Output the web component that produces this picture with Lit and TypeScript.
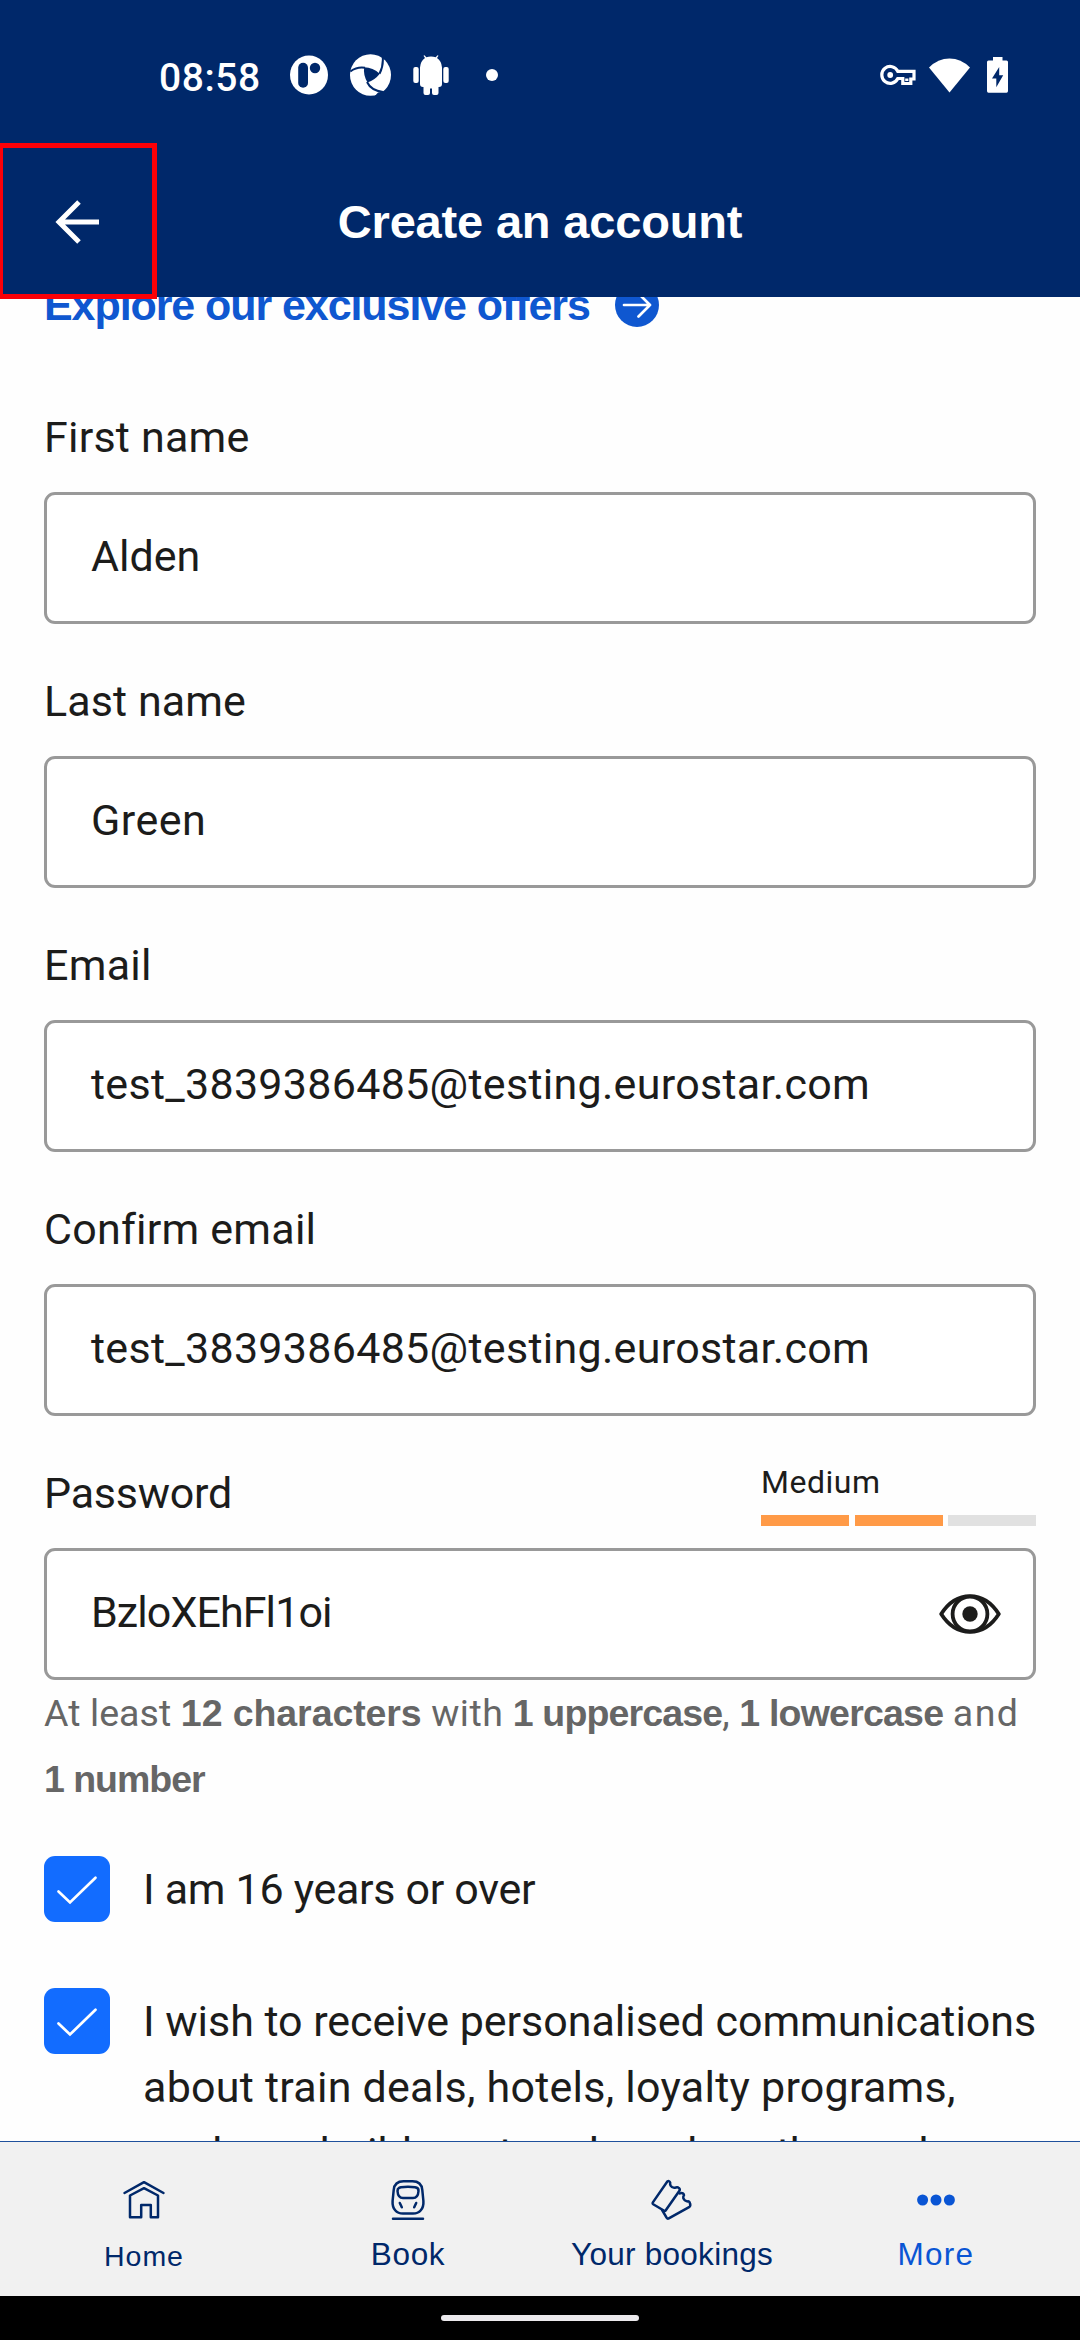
import { LitElement, html, css, svg, nothing } from "lit";
import { customElement, property } from "lit/decorators.js";

const BODY = `Roboto, "Liberation Sans", sans-serif`;
const DISPLAY = `"Liberation Sans", Arial, sans-serif`;
const ctx = document.createElement("canvas").getContext("2d")!;

// Letter spacing that makes the inked width of a run equal to `width`.
function tracking(text: string, weight: number, size: number, width: number, family: string): string {
  ctx.font = `${weight} ${size}px ${family}`;
  const m = ctx.measureText(text);
  const ink = m.actualBoundingBoxRight + m.actualBoundingBoxLeft;
  return `letter-spacing:${((width - ink) / Math.max(1, text.length - 1)).toFixed(3)}px`;
}

/** A run of text set to a given width. */
@customElement("tracked-text")
export class TrackedText extends LitElement {
  @property() text = "";
  @property({ type: Number }) width = 0;
  @property({ type: Number }) size = 43;
  @property({ type: Number }) weight = 400;
  @property({ type: Boolean }) display = false;

  static styles = css`
    :host { display: inline; white-space: pre; }
    .w700 { font-weight: 700; }
    .w500 { font-weight: 500; }
    .display { font-family: "Liberation Sans", Arial, sans-serif; }
  `;

  render() {
    const display = this.display || this.weight === 700;
    return html`<span class="w${this.weight} ${display ? "display" : ""}" style=${tracking(this.text, this.weight, this.size, this.width, display ? DISPLAY : BODY)}>${this.text}</span>`;
  }
}

const run = (text: string, width: number, size = 43, weight = 400, display = false) =>
  html`<tracked-text .text=${text} .width=${width} .size=${size} .weight=${weight} .display=${display}></tracked-text>`;

@customElement("form-field")
export class FormField extends LitElement {
  @property() label = "";
  @property({ type: Number }) labelWidth = 0;
  @property() value = "";
  @property({ type: Number }) valueWidth = 0;
  @property({ type: Boolean }) password = false;

  static styles = css`
    :host { display: block; }
    .head { display: flex; justify-content: space-between; height: 66px; margin-bottom: 22px; line-height: 66px; }
    .box {
      display: flex; align-items: center; justify-content: space-between;
      box-sizing: border-box; height: 132px; border: 3px solid #999; border-radius: 11px;
      padding: 0 32px 0 44px; background: #fff;
    }
    .value { padding-bottom: 4px; }
    .strength { width: 275px; font-size: 32px; line-height: 44px; display: flex; flex-direction: column; gap: 11px; }
    .bars { display: grid; grid-template-columns: repeat(3, 88px); justify-content: space-between; }
    .bar { height: 11px; background: #e1e1e1; }
    .bar.on { background: #ff9a47; }
    .eye { display: block; }
  `;

  render() {
    return html`
      <div class="head">
        <span>${run(this.label, this.labelWidth)}</span>
        ${this.password
          ? html`<div class="strength">
              <span>${run("Medium", 115, 32)}</span>
              <div class="bars"><i class="bar on"></i><i class="bar on"></i><i class="bar"></i></div>
            </div>`
          : nothing}
      </div>
      <div class="box">
        <span class="value">${run(this.value, this.valueWidth)}</span>
        ${this.password
          ? html`<svg class="eye" width="62" height="42" viewBox="0 0 62 42" fill="none" stroke="#1c1c1b" stroke-width="3.8">
              <path stroke-linejoin="round" d="M2.200 21C9.500 9.500 19.500 3.100 31 3.100S52.500 9.500 59.800 21C52.500 32.500 42.500 38.900 31 38.900S9.500 32.500 2.200 21Z" />
              <circle cx="31" cy="21" r="17.400" />
              <circle cx="31" cy="21" r="7.700" fill="#1c1c1b" stroke="none" />
            </svg>`
          : nothing}
      </div>
    `;
  }
}

const icons = {
  home: svg`<path d="M2.500 15 22 4.200 41.500 15" stroke-linecap="round"/>
    <path d="M8 39.300V17.500L22 10.200 36 17.500V39.300H28.800V27H19.200V39.300Z"/>`,
  train: svg`<path d="M17.500 3.300H26.500C32.500 3.300 35.800 6.500 36.300 12L37.400 23C37.900 31 33.500 35.600 27 35.600H17C10.500 35.600 6.100 31 6.600 23L7.700 12C8.200 6.500 11.500 3.300 17.500 3.300Z"/>
    <path d="M15 9.300Q22 8.400 29 9.300 32.800 9.800 32.500 13C32.200 18 30.500 20 27 20H17C13.500 20 11.800 18 11.500 13 11.200 9.800 15 9.300 15 9.300Z"/>
    <path d="M13.800 25 15.800 29.300M30.200 25 28.200 29.300M7 40.700H37" stroke-linecap="round"/>`,
  tickets: svg`<path d="M17.500 3.300 2.700 24.600Q2.300 25.600 3.200 26.200L14.200 32.800Q15.200 33.200 15.800 32.300L29.600 12.500Q30.200 10.900 28.800 10 27.600 8.700 25.800 9.500 22.500 10.600 20.600 7.600 19.800 6 20.200 4.800 19.300 2.400 17.500 3.300Z"/>
    <path d="M11.800 31.500 16.700 39.800Q17.400 41.200 18.800 40.400L39.500 28.800Q40.800 27.800 40 25.500 39.500 23 37.500 23.400 34.300 23 33.300 20.200 33 18.500 34 17.300 33.500 14.500 30.500 15.200L28.600 15.500"/>`,
  more: svg`<g fill="currentColor" stroke="none"><circle cx="8.600" cy="22" r="5.500"/><circle cx="22" cy="22" r="5.500"/><circle cx="35.400" cy="22" r="5.500"/></g>`,
};

const tabs = [
  { icon: icons.home, label: "Home", width: 76, size: 28.5, cls: "small" },
  { icon: icons.train, label: "Book", width: 72, size: 31.5, cls: "" },
  { icon: icons.tickets, label: "Your bookings", width: 201, size: 31.5, cls: "" },
  { icon: icons.more, label: "More", width: 73, size: 31.5, cls: "active" },
];

@customElement("app-root")
export class AppRoot extends LitElement {
  static styles = css`
    :host {
      display: flex; flex-direction: column; position: relative; width: 1080px; height: 2340px; overflow: hidden;
      background: #fefefe; color: #1c1c1b; font-family: Roboto, "Liberation Sans", sans-serif; font-size: 43px;
    }
    .status, .appbar { background: #00286a; color: #fff; display: flex; align-items: center; flex: none; box-sizing: border-box; }
    .status { height: 150px; padding: 0 72px 0 159px; }
    .status svg { display: block; flex: none; }
    .time { width: 131px; font-size: 39px; line-height: 44px; padding-top: 6px; }
    .notif { display: flex; align-items: center; gap: 22px; }
    .dot { width: 12px; height: 12px; border-radius: 50%; background: #fff; margin-left: 15px; }
    .system { display: flex; align-items: center; margin-left: auto; }
    .wifi { margin: 0 17px 0 13px; }
    .appbar { height: 147px; padding-bottom: 3px; display: grid; grid-template-columns: 154px 1fr 154px; }
    .back { display: flex; justify-content: center; }
    .title { font-size: 47px; text-align: center; padding-bottom: 2px; }
    .focus { position: absolute; left: -2px; top: 142.500px; width: 159px; height: 156.500px; box-sizing: border-box; border: 5px solid #fb0007; }
    main { flex: 1; min-height: 0; overflow: hidden; padding: 0 44px; }
    .explore { display: flex; align-items: center; height: 66px; margin: -25px 0 66px 0; line-height: 66px; color: #0f57d0; gap: 25px; }
    .explore svg { display: block; }
    .fields { display: flex; flex-direction: column; gap: 44px; }
    .hint { font-size: 37.500px; line-height: 66px; color: #666; margin-bottom: 44px; white-space: nowrap; }
    .line { display: block; white-space: nowrap; }
    .words { display: flex; gap: 9.500px; }
    .words.tail { gap: 7px; padding-left: 1px; }
    .check { display: flex; gap: 33px; line-height: 66px; margin-bottom: 66px; }
    .tick { flex: none; width: 66px; height: 66px; border-radius: 11px; background: #126cff; }
    .tick svg { display: block; }
    nav { flex: none; display: grid; grid-template-columns: repeat(4, 264px); justify-content: center; box-sizing: border-box; height: 155px; border-top: 1px solid #1f519c; background: #f1f1f1; color: #00286a; }
    .tab { display: flex; flex-direction: column; align-items: center; padding-top: 36px; gap: 14px; font-size: 31.500px; line-height: 36px; }
    .tab.small { font-size: 28.500px; gap: 16px; }
    .tab.active { color: #0a55d4; }
    .tab svg { display: block; }
    .gesture { flex: none; height: 44px; background: #000; display: flex; justify-content: center; align-items: center; box-sizing: border-box; }
    .pill { width: 198px; height: 6px; border-radius: 3px; background: #ebe9ec; }
  `;

  private checkbox(lines: unknown) {
    return html`<div class="check">
      <span class="tick"><svg width="66" height="66" viewBox="0 0 66 66" fill="none" stroke="#fff" stroke-width="2.700" stroke-linecap="round"><path d="M14.500 35.500 26 46.500 51.500 21.800"/></svg></span>
      <div>${lines}</div>
    </div>`;
  }

  render() {
    const email = "test_3839386485@testing.eurostar.com";
    return html`
      <div class="status">
        <span class="time">${run("08:58", 99, 39, 500)}</span>
        <div class="notif">
          <svg width="38" height="40" viewBox="0 0 38 40"><ellipse cx="19" cy="20" rx="19" ry="19.500" fill="#fff"/><rect x="8.200" y="7.800" width="9.800" height="25" rx="4.900" fill="#00286a"/><circle cx="25" cy="13" r="5.200" fill="#00286a"/></svg>
          <svg width="41" height="42" viewBox="0 0 41 42"><ellipse cx="20.500" cy="21" rx="20.500" ry="20.800" fill="#fff"/><path d="M14.200 13.300Q23 13.500 29.800 19.800 25 26 17.500 28.600 13 21 14.200 13.300Z" fill="#00286a"/><path d="M29.500 19.800Q34 11 32.500 .5M15 13.800Q7 12.500 .3 17.500M17 28Q21 36.500 33 38" fill="none" stroke="#00286a" stroke-width="2"/><path d="M28 38.500 35.500 37 36 42 25 42Z" fill="#00286a"/></svg>
          <svg width="36" height="40" viewBox="0 0 36 40" fill="#fff"><path d="M7 12.500Q7.500 6 12 3L10.500 .8 11.500 .2 13.300 2.300Q18 .8 22.700 2.300L24.500 .2 25.500 .8 24 3Q28.500 6 29 12.500V29Q29 32 26 32H25.500V38Q25.500 40 23.500 40H21Q19 40 19 38V33.500H17V38Q17 40 15 40H12.500Q10.500 40 10.500 38V32H10Q7 32 7 29Z"/><rect x=".3" y="12" width="5.400" height="16" rx="2"/><rect x="30.300" y="12" width="5.400" height="16" rx="2"/></svg>
          <i class="dot"></i>
        </div>
        <div class="system">
          <svg width="36" height="22" viewBox="0 0 36 22" fill="none" stroke="#fff" stroke-width="3.200"><path d="M17.800 7.300H34V15H30.800V19.500H22.800V14.500H17.800A8.400 8.400 0 1 1 17.800 7.300Z"/><path d="M26.800 14.500V17"/><circle cx="10.200" cy="11" r="2.900" fill="#fff" stroke="none"/></svg>
          <svg class="wifi" width="41" height="35" viewBox="0 0 41 35"><path d="M20.500 34.500 0 9.500Q9 .5 20.500 .5T41 9.500Z" fill="#fff"/></svg>
          <svg width="21" height="36" viewBox="0 0 21 36"><path d="M6 0H15.500V3.500H19.500Q21 3.500 21 5V34Q21 35.800 19.500 35.800H1.500Q0 35.800 0 34V5Q0 3.500 1.500 3.500H6Z" fill="#fff"/><path d="M12.200 10 5 21.500H9.300V30.200L16.200 18.300H12.200Z" fill="#00286a"/></svg>
        </div>
      </div>
      <header class="appbar">
        <span class="back"><svg width="44" height="44" viewBox="0 0 44 44" fill="none" stroke="#fff" stroke-width="5"><path d="M44 22H4M24 2 4 22 24 42"/></svg></span>
        <span class="title">${run("Create an account", 404, 47, 700)}</span>
      </header>
      <main>
        <div class="explore">
          <span>${run("Explore our exclusive offers", 544, 43, 700)}</span>
          <svg width="44" height="44" viewBox="0 0 44 44"><circle cx="22" cy="22" r="22" fill="#0f57d0"/><path d="M9 22H35M23.500 10.500 35 22 23.500 33.500" fill="none" stroke="#fff" stroke-width="2.700" stroke-linecap="round" stroke-linejoin="round"/></svg>
        </div>
        <div class="fields">
          <form-field label="First name" .labelWidth=${201.5} value="Alden" .valueWidth=${106.5}></form-field>
          <form-field label="Last name" .labelWidth=${198} value="Green" .valueWidth=${110}></form-field>
          <form-field label="Email" .labelWidth=${102} value=${email} .valueWidth=${776}></form-field>
          <form-field label="Confirm email" .labelWidth=${266} value=${email} .valueWidth=${776}></form-field>
          <form-field label="Password" .labelWidth=${183} value="BzloXEhFl1oi" .valueWidth=${236} password></form-field>
        </div>
        <div class="hint">
          <span class="line words">${run("At least", 126, 37.5)}${run("12 characters", 238, 37.5, 700)}${run("with", 70, 37.5)}<span>${run("1 uppercase", 207.5, 37.5, 700)},</span>${run("1 lowercase", 202, 37.5, 700)}${run("and", 61, 37.5)}</span>
          <span class="line">${run("1 number", 160, 37.5, 700)}</span>
        </div>
        ${this.checkbox(run("I am 16 years or over", 389))}
        ${this.checkbox(html`
          <span class="line">${run("I wish to receive personalised communications", 889)}</span>
          <span class="line">${run("about train deals, hotels, loyalty programs,", 809)}</span>
          <span class="line words tail">${run("and", 74)}${run("may", 78)}${run("build", 88)}${run("event", 92)}${run("new", 67)}${run("based", 104)}${run("on", 42)}${run("other", 96)}${run("used", 68)}</span>`)}
      </main>
      <nav>
        ${tabs.map(
          (t) => html`<div class="tab ${t.cls}">
            <svg width="44" height="44" viewBox="0 0 44 44" fill="none" stroke="currentColor" stroke-width="2.500" stroke-linejoin="round">${t.icon}</svg>
            <span>${run(t.label, t.width, t.size, 400, true)}</span>
          </div>`
        )}
      </nav>
      <div class="gesture"><span class="pill"></span></div>
      <div class="focus"></div>
    `;
  }
}
